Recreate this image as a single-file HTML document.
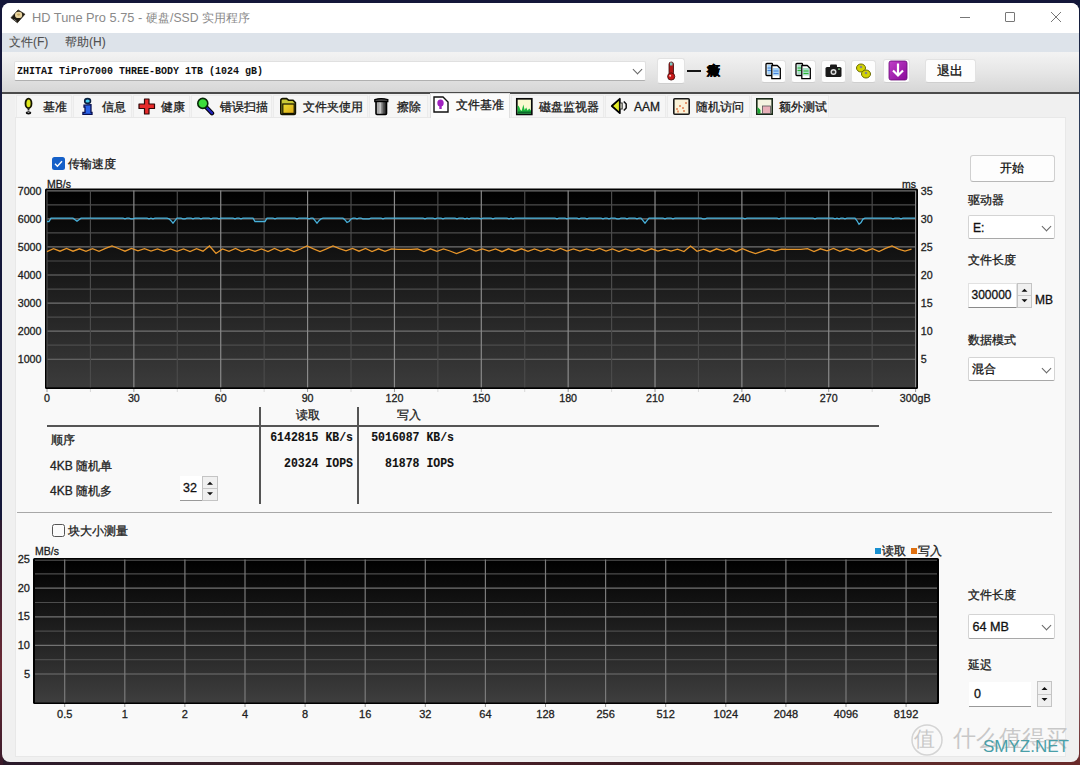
<!DOCTYPE html><html><head><meta charset="utf-8"><title>HD Tune Pro</title><style>
html,body{margin:0;padding:0}body{width:1080px;height:765px;position:relative;overflow:hidden;background:#14173a;font-family:"Liberation Sans",sans-serif}
.a{position:absolute}div{-webkit-text-stroke:0.3px currentColor}
.btn{position:absolute;background:#fdfdfd;border:1px solid #e2e2e2;border-bottom-color:#cfcfcf;border-radius:3px;box-sizing:border-box}
.combo{position:absolute;background:#fff;border:1px solid #d4d4d4;border-bottom-color:#a8a8a8;box-sizing:border-box;border-radius:2px}
.chev{position:absolute;width:6px;height:6px;border-right:1.1px solid #666;border-bottom:1.1px solid #666;transform:rotate(45deg)}
</style></head><body>
<div class="a" style="left:0;top:755px;width:1080px;height:10px;background:linear-gradient(90deg,#2a1a2a,#3a2028 25%,#4a2028 45%,#3a1a22 60%,#5a2a2a 80%,#6a2a2a)"></div>
<div class="a" style="left:0;top:520px;width:3px;height:245px;background:linear-gradient(#2a1a30,#6a2a35 60%,#3a1a2a)"></div>
<div class="a" style="left:1078px;top:0;width:2px;height:765px;background:linear-gradient(#101838,#2a3a58 15%,#4a5866 40%,#6a6070 65%,#8a5a62 90%,#6a2a2a)"></div>
<div class="a" style="left:2px;top:3px;width:1077px;height:759px;border-radius:8px;background:#f0f0f0;overflow:hidden">
<div class="a" style="left:0;top:0;width:1077px;height:30px;background:#fff"></div>
<div class="a" style="left:0;top:30px;width:1077px;height:19px;background:#dde3ea"></div>
<div class="a" style="left:0;top:49px;width:1077px;height:40px;background:linear-gradient(#f3f3f3,#e6e6e6 50%,#d6d6d6)"></div>
<div class="a" style="left:0;top:89px;width:1077px;height:2px;background:#4b4b4b"></div>
<div class="a" style="left:13px;top:114px;width:1051px;height:640px;background:#f9f9f9;border:1px solid #e8e8e8;box-sizing:border-box"></div>
</div>
<svg class="a" style="left:0px;top:0px" width="30" height="30" viewBox="0 0 30 30"><path d="M11 17.7L18.1 9.9L24.9 14.2L17.4 22.8z" fill="#1e1a12" stroke="#2a2418" stroke-width="0.8" stroke-linejoin="round"/><ellipse cx="18.6" cy="14.9" rx="3.6" ry="3.2" fill="#e8d4a0"/><ellipse cx="18.6" cy="14.6" rx="1.6" ry="1.1" fill="#c8a860"/><path d="M14 19.5l2.5 1.5" stroke="#777" stroke-width="1"/></svg>
<div style="position:absolute;left:32px;top:11.7px;font:normal 12.8px 'Liberation Sans', sans-serif;color:#8a8a8a;white-space:nowrap;line-height:1;-webkit-text-stroke:0">HD Tune Pro 5.75 -</div>
<div style="position:absolute;left:146px;top:12px;font:normal 12.2px 'Liberation Sans', sans-serif;color:#8a8a8a;white-space:nowrap;line-height:1;-webkit-text-stroke:0">硬盘/SSD 实用程序</div>
<div class="a" style="left:960px;top:17px;width:10px;height:1px;background:#777"></div>
<div class="a" style="left:1005px;top:12px;width:10px;height:10px;border:1px solid #777;border-radius:1px;box-sizing:border-box"></div>
<svg class="a" style="left:1050px;top:11px" width="12" height="12"><path d="M1 1L11 11M11 1L1 11" stroke="#777" stroke-width="1"/></svg>
<div style="position:absolute;left:9px;top:36px;font:normal 12px 'Liberation Sans', sans-serif;color:#505050;white-space:nowrap;line-height:1;-webkit-text-stroke:0.1px #505050">文件(F)</div>
<div style="position:absolute;left:65px;top:36px;font:normal 12px 'Liberation Sans', sans-serif;color:#505050;white-space:nowrap;line-height:1;-webkit-text-stroke:0.1px #505050">帮助(H)</div>
<div class="combo" style="left:14px;top:61px;width:632px;height:20px;border-color:#e0e0e0;border-bottom-color:#b0b0b0"></div>
<div style="position:absolute;left:17px;top:66px;font:bold 10px 'Liberation Mono', monospace;color:#111;white-space:nowrap;line-height:1;transform:scaleY(1.15);transform-origin:0 0;-webkit-text-stroke:0">ZHITAI TiPro7000 THREE-BODY 1TB (1024 gB)</div>
<div class="chev" style="left:634px;top:66px;"></div>
<div class="btn" style="left:657px;top:58px;width:28px;height:26px"></div>
<svg class="a" style="left:664px;top:61px" width="14" height="20" viewBox="0 0 14 20"><rect x="5" y="1" width="4.5" height="13" rx="2.2" fill="#b01818" stroke="#3a0a0a" stroke-width="0.8"/><rect x="6" y="1.5" width="2.5" height="3" fill="#7ac8c0"/><circle cx="7.2" cy="15.5" r="3.6" fill="#c81818" stroke="#3a0a0a" stroke-width="0.8"/><circle cx="6.2" cy="14.8" r="1" fill="#f8d0d0"/></svg>
<div class="a" style="left:687px;top:69.5px;width:14px;height:2px;background:#151515"></div>
<div style="position:absolute;left:707px;top:64px;font:bold 13px 'Liberation Sans', sans-serif;color:#000;white-space:nowrap;line-height:1;-webkit-text-stroke:0.5px #000">癥</div>
<div class="btn" style="left:761px;top:60px;width:25px;height:23px"></div>
<div class="btn" style="left:791px;top:60px;width:25px;height:23px"></div>
<div class="btn" style="left:821px;top:60px;width:25px;height:23px"></div>
<div class="btn" style="left:851px;top:60px;width:25px;height:23px"></div>
<div class="btn" style="left:883px;top:59px;width:27px;height:24px"></div>
<div class="btn" style="left:925px;top:59px;width:51px;height:24px"></div>
<svg class="a" style="left:765px;top:62px" width="17" height="18" viewBox="0 0 17 18"><rect x="1" y="1.5" width="6.5" height="12" rx="0.8" fill="#fff" stroke="#000" stroke-width="1.3"/><rect x="2.3" y="3" width="4" height="9" fill="#a8d4f8"/><path d="M2.5 6h3.5M2.5 8.5h3.5" stroke="#3a7ad8" stroke-width="0.9"/><path d="M6.8 3.5h5.5l3 3v10.2H6.8z" fill="#fff" stroke="#000" stroke-width="1.3" stroke-linejoin="round"/><rect x="8" y="6" width="6" height="7.5" fill="#a8d4f8"/><path d="M8.5 9h5M8.5 11.5h5" stroke="#3a7ad8" stroke-width="0.9"/></svg>
<svg class="a" style="left:795px;top:62px" width="17" height="18" viewBox="0 0 17 18"><rect x="1" y="1.5" width="6.5" height="12" rx="0.8" fill="#fff" stroke="#000" stroke-width="1.3"/><rect x="2.3" y="3" width="4" height="9" fill="#a8e0c8"/><path d="M2.5 6h3.5M2.5 8.5h3.5" stroke="#20b020" stroke-width="0.9"/><path d="M6.8 3.5h5.5l3 3v10.2H6.8z" fill="#fff" stroke="#000" stroke-width="1.3" stroke-linejoin="round"/><rect x="8" y="6" width="6" height="7.5" fill="#a8e0c8"/><path d="M8.5 9h5M8.5 11.5h5" stroke="#20b020" stroke-width="0.9"/></svg>
<svg class="a" style="left:825px;top:64px" width="17" height="14" viewBox="0 0 17 14"><rect x="0.5" y="3" width="16" height="10" rx="1.5" fill="#1a1a1a"/><rect x="5" y="0.5" width="7" height="3.5" rx="1" fill="#1a1a1a"/><circle cx="8.5" cy="8" r="3" fill="#ddd"/><circle cx="8.5" cy="8" r="1.6" fill="#333"/><rect x="13" y="4.5" width="2" height="1.2" fill="#8c8"/></svg>
<svg class="a" style="left:855px;top:62px" width="17" height="18" viewBox="0 0 17 18"><g stroke="#6a6a00" stroke-width="1"><ellipse cx="6" cy="6" rx="4.5" ry="4" fill="#d4d400"/><ellipse cx="11" cy="12" rx="4.5" ry="4" fill="#d4d400"/></g><circle cx="6" cy="5" r="1.3" fill="#888"/><circle cx="11" cy="11" r="1.3" fill="#888"/></svg>
<svg class="a" style="left:888px;top:60px" width="20" height="21" viewBox="0 0 20 21"><defs><linearGradient id="pg" x1="0" y1="0" x2="1" y2="1"><stop offset="0" stop-color="#c040c8"/><stop offset="1" stop-color="#8a0a9a"/></linearGradient></defs><rect x="1" y="1" width="18" height="19" rx="2" fill="url(#pg)" stroke="#6a0a78" stroke-width="0.8"/><path d="M10 3.5v12M5 10.5l5 5 5-5" stroke="#fff" stroke-width="2.2" fill="none"/></svg>
<div style="position:absolute;left:937px;top:64px;font:500 13px 'Liberation Sans', sans-serif;color:#111;white-space:nowrap;line-height:1;">退出</div>
<div class="a" style="left:15px;top:95px;width:815px;height:22px;background:#f3f3f3"></div>
<div class="a" style="left:16px;top:95px;width:56px;height:22px;background:#f6f6f6;border:1px solid #ebebeb;border-bottom:none;box-sizing:border-box"></div>
<div class="a" style="left:73px;top:95px;width:59px;height:22px;background:#f6f6f6;border:1px solid #ebebeb;border-bottom:none;box-sizing:border-box"></div>
<div class="a" style="left:133px;top:95px;width:57px;height:22px;background:#f6f6f6;border:1px solid #ebebeb;border-bottom:none;box-sizing:border-box"></div>
<div class="a" style="left:191px;top:95px;width:81px;height:22px;background:#f6f6f6;border:1px solid #ebebeb;border-bottom:none;box-sizing:border-box"></div>
<div class="a" style="left:273px;top:95px;width:95px;height:22px;background:#f6f6f6;border:1px solid #ebebeb;border-bottom:none;box-sizing:border-box"></div>
<div class="a" style="left:369px;top:95px;width:59px;height:22px;background:#f6f6f6;border:1px solid #ebebeb;border-bottom:none;box-sizing:border-box"></div>
<div class="a" style="left:511px;top:95px;width:93px;height:22px;background:#f6f6f6;border:1px solid #ebebeb;border-bottom:none;box-sizing:border-box"></div>
<div class="a" style="left:605px;top:95px;width:61px;height:22px;background:#f6f6f6;border:1px solid #ebebeb;border-bottom:none;box-sizing:border-box"></div>
<div class="a" style="left:667px;top:95px;width:83px;height:22px;background:#f6f6f6;border:1px solid #ebebeb;border-bottom:none;box-sizing:border-box"></div>
<div class="a" style="left:751px;top:95px;width:78px;height:22px;background:#f6f6f6;border:1px solid #ebebeb;border-bottom:none;box-sizing:border-box"></div>
<div class="a" style="left:430px;top:93px;width:80px;height:25px;background:#fbfbfb;border:1px solid #e0e0e0;border-bottom:none;box-sizing:border-box"></div>
<div style="position:absolute;left:43px;top:101px;font:500 12px 'Liberation Sans', sans-serif;color:#1a1a1a;white-space:nowrap;line-height:1;">基准</div>
<div style="position:absolute;left:102px;top:101px;font:500 12px 'Liberation Sans', sans-serif;color:#1a1a1a;white-space:nowrap;line-height:1;">信息</div>
<div style="position:absolute;left:161px;top:101px;font:500 12px 'Liberation Sans', sans-serif;color:#1a1a1a;white-space:nowrap;line-height:1;">健康</div>
<div style="position:absolute;left:220px;top:101px;font:500 12px 'Liberation Sans', sans-serif;color:#1a1a1a;white-space:nowrap;line-height:1;">错误扫描</div>
<div style="position:absolute;left:303px;top:101px;font:500 12px 'Liberation Sans', sans-serif;color:#1a1a1a;white-space:nowrap;line-height:1;">文件夹使用</div>
<div style="position:absolute;left:397px;top:101px;font:500 12px 'Liberation Sans', sans-serif;color:#1a1a1a;white-space:nowrap;line-height:1;">擦除</div>
<div style="position:absolute;left:456px;top:99px;font:500 12px 'Liberation Sans', sans-serif;color:#1a1a1a;white-space:nowrap;line-height:1;">文件基准</div>
<div style="position:absolute;left:539px;top:101px;font:500 12px 'Liberation Sans', sans-serif;color:#1a1a1a;white-space:nowrap;line-height:1;">磁盘监视器</div>
<div style="position:absolute;left:634px;top:101px;font:500 12px 'Liberation Sans', sans-serif;color:#1a1a1a;white-space:nowrap;line-height:1;">AAM</div>
<div style="position:absolute;left:696px;top:101px;font:500 12px 'Liberation Sans', sans-serif;color:#1a1a1a;white-space:nowrap;line-height:1;">随机访问</div>
<div style="position:absolute;left:779px;top:101px;font:500 12px 'Liberation Sans', sans-serif;color:#1a1a1a;white-space:nowrap;line-height:1;">额外测试</div>
<svg class="a" style="left:24px;top:97px" width="10" height="19" viewBox="0 0 10 19"><ellipse cx="4.5" cy="6.4" rx="3" ry="4.7" fill="#dfe81c" stroke="#141400" stroke-width="1.8"/><rect x="3.6" y="11" width="1.8" height="2.5" fill="#222"/><ellipse cx="4.5" cy="15.8" rx="2.8" ry="1.6" fill="#0a0a0a"/><ellipse cx="4.5" cy="15.4" rx="1.2" ry="0.45" fill="#ddd"/></svg>
<svg class="a" style="left:82px;top:97px" width="11" height="19" viewBox="0 0 11 19"><ellipse cx="5.6" cy="4" rx="2.9" ry="2.4" fill="#48d0f0" stroke="#0a2040" stroke-width="1.6"/><path d="M2 8.2L9 7.6V15.4H10V17.4H0.9V15.4H3V10.2H2z" fill="#2a62e8" stroke="#0a1050" stroke-width="1.3"/></svg>
<svg class="a" style="left:138px;top:98px" width="18" height="17" viewBox="0 0 18 17"><path d="M6.5 1h4.5v5h5.5v4.5h-5.5v5.5H6.5v-5.5H1V6h5.5z" fill="#e82a2a" stroke="#300808" stroke-width="1.2" stroke-linejoin="round"/></svg>
<svg class="a" style="left:195px;top:96px" width="20" height="20" viewBox="0 0 20 20"><path d="M11 11L17 17.2" stroke="#000" stroke-width="4.4" stroke-linecap="round"/><path d="M11 11L17 17.2" stroke="#2222b8" stroke-width="2.4" stroke-linecap="round"/><circle cx="7.8" cy="7.4" r="5" fill="#3cdc3c" stroke="#082808" stroke-width="1.6"/></svg>
<svg class="a" style="left:279px;top:97px" width="18" height="19" viewBox="0 0 18 19"><defs><linearGradient id="fg" x1="0" y1="0" x2="1" y2="1"><stop offset="0" stop-color="#e8e030"/><stop offset="1" stop-color="#e0a818"/></linearGradient></defs><path d="M1.8 3.5Q1.8 1.6 3.8 1.6H7.6L9.6 3.2H14L16.4 5.6V16.2Q16.4 17.4 15.2 17.4H3Q1.8 17.4 1.8 16.2z" fill="#c8c838" stroke="#141400" stroke-width="1.6"/><rect x="3.8" y="7" width="11.4" height="9.4" fill="url(#fg)" stroke="#141400" stroke-width="1.2"/></svg>
<svg class="a" style="left:373px;top:97px" width="17" height="19" viewBox="0 0 17 19"><defs><linearGradient id="tg" x1="0" y1="0" x2="1" y2="0"><stop offset="0" stop-color="#888"/><stop offset="0.35" stop-color="#e0e0e0"/><stop offset="0.7" stop-color="#555"/><stop offset="1" stop-color="#222"/></linearGradient></defs><rect x="3" y="4" width="10.5" height="13.5" rx="1" fill="url(#tg)" stroke="#000" stroke-width="1.6"/><path d="M1.8 2.6Q8 0.6 14.8 2.6V4.6H1.8z" fill="#444" stroke="#000" stroke-width="1.3"/><path d="M6 5.5v11M9 5.5v11" stroke="#777" stroke-width="0.7"/></svg>
<svg class="a" style="left:433px;top:96px" width="16" height="17" viewBox="0 0 16 17"><path d="M1 1h9l5 5v10H1z" fill="#fff" stroke="#111" stroke-width="1.4"/><ellipse cx="7.5" cy="7" rx="3.2" ry="3.6" fill="#a020c0"/><rect x="6.3" y="10" width="2.4" height="3" fill="#a020c0"/></svg>
<svg class="a" style="left:515px;top:97px" width="19" height="19" viewBox="0 0 19 19"><rect x="1.8" y="1.8" width="15" height="15.6" fill="#fafad0" stroke="#0a0a0a" stroke-width="1.7"/><path d="M2.6 16.6V8.5Q4 8.5 5.2 12.5L6.6 14L8.4 7.5L9.6 13L11.2 10.5L12.6 13.5L14.2 11.5L16 13.5V16.6z" fill="#1cb83c"/><path d="M2.6 16.6V14.5H16V16.6z" fill="#0a6a2a"/></svg>
<svg class="a" style="left:610px;top:97px" width="19" height="18" viewBox="0 0 19 18"><path d="M1.8 9L9.8 1.8V16.2z" fill="#e4ec28" stroke="#000" stroke-width="1.8" stroke-linejoin="round"/><rect x="10" y="6" width="2.2" height="6" fill="#d8d8c8" stroke="#222" stroke-width="0.9"/><path d="M13.8 4.5L16.2 7V11L13.8 13.5" stroke="#111" stroke-width="1.5" fill="none"/></svg>
<svg class="a" style="left:673px;top:98px" width="17" height="17" viewBox="0 0 17 17"><rect x="0.8" y="0.8" width="15.4" height="15.4" rx="1" fill="#fbf3d8" stroke="#1a1a1a" stroke-width="1.6"/><g fill="#e89a70"><rect x="3" y="10" width="2" height="2"/><rect x="6" y="7" width="2" height="2"/><rect x="9" y="9" width="2" height="2"/><rect x="12" y="4" width="2" height="2"/><rect x="4" y="12.5" width="2" height="2"/><rect x="10" y="12" width="2" height="2"/></g></svg>
<svg class="a" style="left:756px;top:98px" width="17" height="17" viewBox="0 0 17 17"><rect x="0.8" y="0.8" width="15.4" height="15.4" fill="#f4f4e0" stroke="#1a2a1a" stroke-width="1.6"/><path d="M1.5 9l3 3v3.5h-3z" fill="#1aa830"/><rect x="6.5" y="8" width="8" height="7.5" fill="#e8b0b8" stroke="#555" stroke-width="0.8"/></svg>
<div class="a" style="left:52px;top:157px;width:13px;height:13px;background:#1560c8;border-radius:2.5px"></div>
<svg class="a" style="left:52px;top:157px" width="13" height="13"><path d="M3 6.8l2.4 2.4L10 4.3" stroke="#fff" stroke-width="1.4" fill="none"/></svg>
<div style="position:absolute;left:68px;top:158px;font:500 12px 'Liberation Sans', sans-serif;color:#1a1a1a;white-space:nowrap;line-height:1;">传输速度</div>
<svg width="1080" height="765" style="position:absolute;left:0;top:0">
<defs><linearGradient id="g1" x1="0" y1="0" x2="0" y2="1"><stop offset="0" stop-color="#000"/><stop offset="1" stop-color="#3b3b3b"/></linearGradient>
<linearGradient id="g2" x1="0" y1="0" x2="0" y2="1"><stop offset="0" stop-color="#000"/><stop offset="1" stop-color="#3e3e3e"/></linearGradient></defs>
<rect x="45" y="188.5" width="873" height="200.5" rx="1.5" fill="#000"/>
<rect x="47" y="190.5" width="868.6" height="196.8" fill="url(#g1)"/>
<line x1="47" x2="915.6" y1="359.23" y2="359.23" stroke="#727272" stroke-width="1.2"/>
<line x1="47" x2="915.6" y1="345.19" y2="345.19" stroke="#4c4c4c" stroke-width="1.2"/>
<line x1="47" x2="915.6" y1="331.16" y2="331.16" stroke="#727272" stroke-width="1.2"/>
<line x1="47" x2="915.6" y1="317.12" y2="317.12" stroke="#4c4c4c" stroke-width="1.2"/>
<line x1="47" x2="915.6" y1="303.09" y2="303.09" stroke="#727272" stroke-width="1.2"/>
<line x1="47" x2="915.6" y1="289.05" y2="289.05" stroke="#4c4c4c" stroke-width="1.2"/>
<line x1="47" x2="915.6" y1="275.01" y2="275.01" stroke="#727272" stroke-width="1.2"/>
<line x1="47" x2="915.6" y1="260.98" y2="260.98" stroke="#4c4c4c" stroke-width="1.2"/>
<line x1="47" x2="915.6" y1="246.94" y2="246.94" stroke="#727272" stroke-width="1.2"/>
<line x1="47" x2="915.6" y1="232.91" y2="232.91" stroke="#4c4c4c" stroke-width="1.2"/>
<line x1="47" x2="915.6" y1="218.87" y2="218.87" stroke="#727272" stroke-width="1.2"/>
<line x1="47" x2="915.6" y1="204.84" y2="204.84" stroke="#4c4c4c" stroke-width="1.2"/>
<line x1="47" x2="915.6" y1="190.80" y2="190.80" stroke="#727272" stroke-width="1.2"/>
<line x1="47.00" x2="47.00" y1="190.5" y2="387.3" stroke="#4a4a4a" stroke-width="1.2"/>
<line x1="90.43" x2="90.43" y1="190.5" y2="387.3" stroke="#4a4a4a" stroke-width="1.2"/>
<line x1="133.86" x2="133.86" y1="190.5" y2="387.3" stroke="#8a8a8a" stroke-width="1.2"/>
<line x1="177.29" x2="177.29" y1="190.5" y2="387.3" stroke="#4a4a4a" stroke-width="1.2"/>
<line x1="220.72" x2="220.72" y1="190.5" y2="387.3" stroke="#8a8a8a" stroke-width="1.2"/>
<line x1="264.15" x2="264.15" y1="190.5" y2="387.3" stroke="#4a4a4a" stroke-width="1.2"/>
<line x1="307.58" x2="307.58" y1="190.5" y2="387.3" stroke="#8a8a8a" stroke-width="1.2"/>
<line x1="351.01" x2="351.01" y1="190.5" y2="387.3" stroke="#4a4a4a" stroke-width="1.2"/>
<line x1="394.44" x2="394.44" y1="190.5" y2="387.3" stroke="#8a8a8a" stroke-width="1.2"/>
<line x1="437.87" x2="437.87" y1="190.5" y2="387.3" stroke="#4a4a4a" stroke-width="1.2"/>
<line x1="481.30" x2="481.30" y1="190.5" y2="387.3" stroke="#8a8a8a" stroke-width="1.2"/>
<line x1="524.73" x2="524.73" y1="190.5" y2="387.3" stroke="#4a4a4a" stroke-width="1.2"/>
<line x1="568.16" x2="568.16" y1="190.5" y2="387.3" stroke="#8a8a8a" stroke-width="1.2"/>
<line x1="611.59" x2="611.59" y1="190.5" y2="387.3" stroke="#4a4a4a" stroke-width="1.2"/>
<line x1="655.02" x2="655.02" y1="190.5" y2="387.3" stroke="#8a8a8a" stroke-width="1.2"/>
<line x1="698.45" x2="698.45" y1="190.5" y2="387.3" stroke="#4a4a4a" stroke-width="1.2"/>
<line x1="741.88" x2="741.88" y1="190.5" y2="387.3" stroke="#8a8a8a" stroke-width="1.2"/>
<line x1="785.31" x2="785.31" y1="190.5" y2="387.3" stroke="#4a4a4a" stroke-width="1.2"/>
<line x1="828.74" x2="828.74" y1="190.5" y2="387.3" stroke="#8a8a8a" stroke-width="1.2"/>
<line x1="872.17" x2="872.17" y1="190.5" y2="387.3" stroke="#4a4a4a" stroke-width="1.2"/>
<line x1="915.60" x2="915.60" y1="190.5" y2="387.3" stroke="#8a8a8a" stroke-width="1.2"/>
<line x1="47.00" x2="47.00" y1="389" y2="392" stroke="#999" stroke-width="1"/>
<line x1="90.43" x2="90.43" y1="389" y2="392" stroke="#d8d8d8" stroke-width="1"/>
<line x1="133.86" x2="133.86" y1="389" y2="392" stroke="#999" stroke-width="1"/>
<line x1="177.29" x2="177.29" y1="389" y2="392" stroke="#d8d8d8" stroke-width="1"/>
<line x1="220.72" x2="220.72" y1="389" y2="392" stroke="#999" stroke-width="1"/>
<line x1="264.15" x2="264.15" y1="389" y2="392" stroke="#d8d8d8" stroke-width="1"/>
<line x1="307.58" x2="307.58" y1="389" y2="392" stroke="#999" stroke-width="1"/>
<line x1="351.01" x2="351.01" y1="389" y2="392" stroke="#d8d8d8" stroke-width="1"/>
<line x1="394.44" x2="394.44" y1="389" y2="392" stroke="#999" stroke-width="1"/>
<line x1="437.87" x2="437.87" y1="389" y2="392" stroke="#d8d8d8" stroke-width="1"/>
<line x1="481.30" x2="481.30" y1="389" y2="392" stroke="#999" stroke-width="1"/>
<line x1="524.73" x2="524.73" y1="389" y2="392" stroke="#d8d8d8" stroke-width="1"/>
<line x1="568.16" x2="568.16" y1="389" y2="392" stroke="#999" stroke-width="1"/>
<line x1="611.59" x2="611.59" y1="389" y2="392" stroke="#d8d8d8" stroke-width="1"/>
<line x1="655.02" x2="655.02" y1="389" y2="392" stroke="#999" stroke-width="1"/>
<line x1="698.45" x2="698.45" y1="389" y2="392" stroke="#d8d8d8" stroke-width="1"/>
<line x1="741.88" x2="741.88" y1="389" y2="392" stroke="#999" stroke-width="1"/>
<line x1="785.31" x2="785.31" y1="389" y2="392" stroke="#d8d8d8" stroke-width="1"/>
<line x1="828.74" x2="828.74" y1="389" y2="392" stroke="#999" stroke-width="1"/>
<line x1="872.17" x2="872.17" y1="389" y2="392" stroke="#d8d8d8" stroke-width="1"/>
<line x1="915.60" x2="915.60" y1="389" y2="392" stroke="#999" stroke-width="1"/>
<polyline fill="none" stroke="#48b2dc" stroke-width="1.3" points="47.0,221.5 49.0,221.5 51.0,218.2 53.0,218.2 55.0,218.2 57.0,218.2 59.0,218.2 61.0,218.2 63.0,218.2 65.0,218.2 67.0,218.2 69.0,218.2 71.0,218.2 73.0,218.2 75.0,219.7 77.0,221.2 79.0,219.7 81.0,218.2 83.0,218.2 85.0,218.2 87.0,218.2 89.0,218.2 91.0,218.2 93.0,218.2 95.0,218.2 97.0,218.2 99.0,218.2 101.0,218.2 103.0,218.2 105.0,218.2 107.0,218.2 109.0,218.2 111.0,218.2 113.0,218.2 115.0,218.2 117.0,218.2 119.0,218.2 121.0,218.2 123.0,218.2 125.0,218.8 127.0,218.2 129.0,218.2 131.0,218.8 133.0,218.8 135.0,218.2 137.0,218.2 139.0,218.2 141.0,218.2 143.0,218.2 145.0,218.2 147.0,218.2 149.0,218.8 151.0,218.2 153.0,218.8 155.0,218.2 157.0,218.2 159.0,218.2 161.0,218.2 163.0,218.2 165.0,218.2 167.0,218.2 169.0,218.8 171.0,220.7 173.0,223.2 175.0,220.7 177.0,218.2 179.0,218.2 181.0,218.2 183.0,218.8 185.0,218.8 187.0,218.2 189.0,218.2 191.0,218.2 193.0,218.8 195.0,218.2 197.0,218.2 199.0,218.2 201.0,218.8 203.0,218.2 205.0,218.2 207.0,218.2 209.0,218.2 211.0,218.8 213.0,218.2 215.0,218.2 217.0,218.2 219.0,218.8 221.0,218.2 223.0,218.2 225.0,218.2 227.0,218.2 229.0,218.2 231.0,218.2 233.0,218.2 235.0,218.8 237.0,218.2 239.0,218.2 241.0,218.8 243.0,218.2 245.0,218.2 247.0,218.2 249.0,218.2 251.0,218.2 253.0,218.2 255.0,221.5 257.0,221.5 259.0,221.5 261.0,221.5 263.0,221.5 265.0,221.5 267.0,218.2 269.0,218.2 271.0,218.2 273.0,218.2 275.0,218.8 277.0,218.2 279.0,218.2 281.0,218.2 283.0,218.2 285.0,218.2 287.0,218.2 289.0,218.2 291.0,218.2 293.0,218.2 295.0,218.2 297.0,218.8 299.0,218.2 301.0,218.2 303.0,218.2 305.0,218.2 307.0,218.2 309.0,218.8 311.0,218.2 313.0,218.2 315.0,220.7 317.0,223.2 319.0,220.7 321.0,218.8 323.0,218.2 325.0,218.2 327.0,218.2 329.0,218.2 331.0,218.2 333.0,218.2 335.0,218.2 337.0,218.2 339.0,218.2 341.0,218.2 343.0,218.2 345.0,219.9 347.0,222.4 349.0,221.5 351.0,219.0 353.0,218.2 355.0,218.2 357.0,218.8 359.0,218.2 361.0,218.2 363.0,218.8 365.0,218.8 367.0,218.8 369.0,218.8 371.0,218.2 373.0,218.2 375.0,218.2 377.0,218.2 379.0,218.2 381.0,218.2 383.0,218.8 385.0,218.2 387.0,218.2 389.0,218.2 391.0,218.2 393.0,218.2 395.0,218.2 397.0,218.2 399.0,218.2 401.0,218.2 403.0,218.2 405.0,218.2 407.0,218.2 409.0,218.2 411.0,218.2 413.0,218.2 415.0,218.2 417.0,218.2 419.0,218.2 421.0,218.2 423.0,218.2 425.0,218.8 427.0,218.2 429.0,218.2 431.0,218.2 433.0,218.2 435.0,218.8 437.0,218.2 439.0,218.2 441.0,218.2 443.0,218.8 445.0,218.2 447.0,218.2 449.0,218.2 451.0,218.2 453.0,218.2 455.0,218.2 457.0,218.8 459.0,218.2 461.0,218.2 463.0,218.2 465.0,218.8 467.0,218.2 469.0,218.8 471.0,218.2 473.0,218.2 475.0,218.2 477.0,218.2 479.0,218.2 481.0,218.8 483.0,218.2 485.0,218.2 487.0,218.2 489.0,218.2 491.0,218.2 493.0,218.8 495.0,218.2 497.0,218.2 499.0,218.2 501.0,218.2 503.0,218.2 505.0,218.2 507.0,218.2 509.0,218.8 511.0,218.2 513.0,218.8 515.0,218.2 517.0,218.2 519.0,218.2 521.0,218.2 523.0,218.2 525.0,218.2 527.0,218.2 529.0,218.2 531.0,218.2 533.0,218.2 535.0,218.2 537.0,218.2 539.0,218.2 541.0,218.2 543.0,218.2 545.0,218.2 547.0,218.2 549.0,218.2 551.0,218.2 553.0,218.2 555.0,218.2 557.0,218.8 559.0,218.2 561.0,218.2 563.0,218.2 565.0,218.2 567.0,218.8 569.0,218.2 571.0,218.2 573.0,218.2 575.0,218.2 577.0,218.2 579.0,218.8 581.0,218.2 583.0,218.2 585.0,218.2 587.0,218.8 589.0,218.2 591.0,218.2 593.0,218.2 595.0,218.2 597.0,218.2 599.0,218.2 601.0,218.2 603.0,218.8 605.0,218.2 607.0,218.2 609.0,218.8 611.0,218.2 613.0,218.2 615.0,218.2 617.0,218.8 619.0,218.8 621.0,218.2 623.0,218.2 625.0,218.2 627.0,218.8 629.0,218.2 631.0,218.2 633.0,218.2 635.0,218.2 637.0,218.8 639.0,218.2 641.0,218.2 643.0,220.7 645.0,223.2 647.0,220.7 649.0,218.2 651.0,218.2 653.0,218.2 655.0,218.2 657.0,218.2 659.0,218.2 661.0,218.2 663.0,218.2 665.0,218.8 667.0,218.2 669.0,218.2 671.0,218.2 673.0,218.8 675.0,218.2 677.0,218.2 679.0,218.2 681.0,218.2 683.0,218.2 685.0,218.2 687.0,218.2 689.0,218.2 691.0,218.2 693.0,218.2 695.0,218.2 697.0,218.2 699.0,218.2 701.0,218.2 703.0,218.8 705.0,218.8 707.0,218.2 709.0,218.2 711.0,218.2 713.0,218.2 715.0,218.2 717.0,218.2 719.0,218.2 721.0,218.2 723.0,218.2 725.0,218.2 727.0,218.2 729.0,218.2 731.0,218.2 733.0,218.2 735.0,218.2 737.0,218.2 739.0,218.2 741.0,218.2 743.0,218.2 745.0,218.8 747.0,218.2 749.0,218.2 751.0,218.2 753.0,218.2 755.0,218.2 757.0,218.2 759.0,218.2 761.0,218.2 763.0,218.2 765.0,218.2 767.0,218.2 769.0,218.2 771.0,218.2 773.0,218.2 775.0,218.2 777.0,218.2 779.0,218.8 781.0,218.2 783.0,218.2 785.0,218.2 787.0,218.2 789.0,218.2 791.0,218.2 793.0,218.2 795.0,218.2 797.0,218.2 799.0,218.2 801.0,218.2 803.0,218.2 805.0,218.2 807.0,218.2 809.0,218.2 811.0,218.2 813.0,218.2 815.0,218.8 817.0,218.2 819.0,218.2 821.0,218.2 823.0,218.2 825.0,218.2 827.0,218.2 829.0,218.2 831.0,218.2 833.0,218.2 835.0,218.8 837.0,218.2 839.0,218.8 841.0,218.2 843.0,218.2 845.0,218.8 847.0,218.2 849.0,218.2 851.0,218.2 853.0,218.2 855.0,218.2 857.0,220.8 859.0,224.3 861.0,222.6 863.0,219.1 865.0,218.2 867.0,218.2 869.0,218.2 871.0,218.2 873.0,218.2 875.0,218.2 877.0,218.2 879.0,218.2 881.0,218.2 883.0,218.2 885.0,218.2 887.0,218.2 889.0,218.2 891.0,218.2 893.0,218.8 895.0,218.2 897.0,218.2 899.0,218.2 901.0,218.8 903.0,218.2 905.0,218.2 907.0,218.2 909.0,218.2 911.0,218.2 913.0,218.2 915.0,218.2"/>
<polyline fill="none" stroke="#e8962a" stroke-width="1.3" points="47.0,251.7 53.5,248.6 60.0,251.2 66.5,248.4 73.0,251.2 79.5,248.8 86.0,251.3 92.5,248.6 99.0,251.3 105.5,248.4 112.0,246.0 118.5,248.5 125.0,251.2 131.5,248.4 138.0,250.9 144.5,248.6 151.0,251.1 157.5,248.9 164.0,251.3 170.5,249.0 177.0,251.4 183.5,249.0 190.0,251.6 196.5,248.7 203.0,251.2 209.5,246.0 216.0,253.5 222.5,249.0 229.0,251.4 235.5,248.4 242.0,251.6 248.5,249.1 255.0,251.4 261.5,249.0 268.0,251.5 274.5,248.5 281.0,251.3 287.5,248.8 294.0,251.6 300.5,249.0 307.0,246.0 313.5,248.9 320.0,251.6 326.5,248.9 333.0,246.0 339.5,248.6 346.0,250.9 352.5,248.5 359.0,251.2 365.5,248.5 372.0,251.6 378.5,248.8 385.0,251.4 391.5,248.9 398.0,249.3 404.5,249.3 411.0,249.3 417.5,249.0 424.0,251.5 430.5,248.8 437.0,251.3 443.5,248.9 450.0,251.0 456.5,253.5 463.0,251.1 469.5,248.5 476.0,251.1 482.5,249.0 489.0,251.1 495.5,249.0 502.0,251.7 508.5,248.8 515.0,251.2 521.5,248.8 528.0,251.4 534.5,249.0 541.0,251.4 547.5,248.9 554.0,251.0 560.5,248.5 567.0,251.1 573.5,249.0 580.0,251.1 586.5,248.9 593.0,250.9 599.5,248.4 606.0,251.1 612.5,248.9 619.0,251.5 625.5,248.9 632.0,251.1 638.5,248.8 645.0,251.3 651.5,248.8 658.0,251.0 664.5,249.1 671.0,251.1 677.5,249.2 684.0,251.6 690.5,246.0 697.0,251.3 703.5,249.1 710.0,251.7 716.5,248.8 723.0,251.1 729.5,248.6 736.0,251.7 742.5,248.6 749.0,251.4 755.5,253.5 762.0,251.3 768.5,249.2 775.0,251.0 781.5,249.1 788.0,249.3 794.5,249.3 801.0,249.3 807.5,248.6 814.0,251.6 820.5,248.8 827.0,250.9 833.5,248.4 840.0,251.3 846.5,248.8 853.0,251.1 859.5,248.5 866.0,251.2 872.5,248.7 879.0,251.6 885.5,248.4 892.0,246.0 898.5,249.1 905.0,251.0 911.5,249.1"/>
<rect x="33" y="558" width="906" height="146" rx="1.5" fill="#000"/>
<rect x="35" y="559.5" width="902" height="143" fill="url(#g2)"/>
<line x1="35" x2="937" y1="674.00" y2="674.00" stroke="#727272" stroke-width="1.2"/>
<line x1="35" x2="937" y1="659.70" y2="659.70" stroke="#4c4c4c" stroke-width="1.2"/>
<line x1="35" x2="937" y1="645.40" y2="645.40" stroke="#727272" stroke-width="1.2"/>
<line x1="35" x2="937" y1="631.10" y2="631.10" stroke="#4c4c4c" stroke-width="1.2"/>
<line x1="35" x2="937" y1="616.80" y2="616.80" stroke="#727272" stroke-width="1.2"/>
<line x1="35" x2="937" y1="602.50" y2="602.50" stroke="#4c4c4c" stroke-width="1.2"/>
<line x1="35" x2="937" y1="588.20" y2="588.20" stroke="#727272" stroke-width="1.2"/>
<line x1="35" x2="937" y1="573.90" y2="573.90" stroke="#4c4c4c" stroke-width="1.2"/>
<line x1="35" x2="937" y1="560.2" y2="560.2" stroke="#5a5a5a" stroke-width="1"/>
<line x1="64.70" x2="64.70" y1="559.5" y2="702.6" stroke="#7a7a7a" stroke-width="1.2"/>
<line x1="64.70" x2="64.70" y1="704" y2="707" stroke="#999" stroke-width="1"/>
<line x1="124.80" x2="124.80" y1="559.5" y2="702.6" stroke="#7a7a7a" stroke-width="1.2"/>
<line x1="124.80" x2="124.80" y1="704" y2="707" stroke="#999" stroke-width="1"/>
<line x1="184.90" x2="184.90" y1="559.5" y2="702.6" stroke="#7a7a7a" stroke-width="1.2"/>
<line x1="184.90" x2="184.90" y1="704" y2="707" stroke="#999" stroke-width="1"/>
<line x1="245.00" x2="245.00" y1="559.5" y2="702.6" stroke="#7a7a7a" stroke-width="1.2"/>
<line x1="245.00" x2="245.00" y1="704" y2="707" stroke="#999" stroke-width="1"/>
<line x1="305.10" x2="305.10" y1="559.5" y2="702.6" stroke="#7a7a7a" stroke-width="1.2"/>
<line x1="305.10" x2="305.10" y1="704" y2="707" stroke="#999" stroke-width="1"/>
<line x1="365.20" x2="365.20" y1="559.5" y2="702.6" stroke="#7a7a7a" stroke-width="1.2"/>
<line x1="365.20" x2="365.20" y1="704" y2="707" stroke="#999" stroke-width="1"/>
<line x1="425.30" x2="425.30" y1="559.5" y2="702.6" stroke="#7a7a7a" stroke-width="1.2"/>
<line x1="425.30" x2="425.30" y1="704" y2="707" stroke="#999" stroke-width="1"/>
<line x1="485.40" x2="485.40" y1="559.5" y2="702.6" stroke="#7a7a7a" stroke-width="1.2"/>
<line x1="485.40" x2="485.40" y1="704" y2="707" stroke="#999" stroke-width="1"/>
<line x1="545.50" x2="545.50" y1="559.5" y2="702.6" stroke="#7a7a7a" stroke-width="1.2"/>
<line x1="545.50" x2="545.50" y1="704" y2="707" stroke="#999" stroke-width="1"/>
<line x1="605.60" x2="605.60" y1="559.5" y2="702.6" stroke="#7a7a7a" stroke-width="1.2"/>
<line x1="605.60" x2="605.60" y1="704" y2="707" stroke="#999" stroke-width="1"/>
<line x1="665.70" x2="665.70" y1="559.5" y2="702.6" stroke="#7a7a7a" stroke-width="1.2"/>
<line x1="665.70" x2="665.70" y1="704" y2="707" stroke="#999" stroke-width="1"/>
<line x1="725.80" x2="725.80" y1="559.5" y2="702.6" stroke="#7a7a7a" stroke-width="1.2"/>
<line x1="725.80" x2="725.80" y1="704" y2="707" stroke="#999" stroke-width="1"/>
<line x1="785.90" x2="785.90" y1="559.5" y2="702.6" stroke="#7a7a7a" stroke-width="1.2"/>
<line x1="785.90" x2="785.90" y1="704" y2="707" stroke="#999" stroke-width="1"/>
<line x1="846.00" x2="846.00" y1="559.5" y2="702.6" stroke="#7a7a7a" stroke-width="1.2"/>
<line x1="846.00" x2="846.00" y1="704" y2="707" stroke="#999" stroke-width="1"/>
<line x1="906.10" x2="906.10" y1="559.5" y2="702.6" stroke="#7a7a7a" stroke-width="1.2"/>
<line x1="906.10" x2="906.10" y1="704" y2="707" stroke="#999" stroke-width="1"/>
</svg>
<div style="position:absolute;right:1038.5px;top:353.92857142857144px;font:500 10.7px 'Liberation Sans', sans-serif;color:#1e1e1e;white-space:nowrap;line-height:1;text-align:right;">1000</div>
<div style="position:absolute;right:1038.5px;top:325.85714285714283px;font:500 10.7px 'Liberation Sans', sans-serif;color:#1e1e1e;white-space:nowrap;line-height:1;text-align:right;">2000</div>
<div style="position:absolute;right:1038.5px;top:297.7857142857143px;font:500 10.7px 'Liberation Sans', sans-serif;color:#1e1e1e;white-space:nowrap;line-height:1;text-align:right;">3000</div>
<div style="position:absolute;right:1038.5px;top:269.7142857142857px;font:500 10.7px 'Liberation Sans', sans-serif;color:#1e1e1e;white-space:nowrap;line-height:1;text-align:right;">4000</div>
<div style="position:absolute;right:1038.5px;top:241.64285714285714px;font:500 10.7px 'Liberation Sans', sans-serif;color:#1e1e1e;white-space:nowrap;line-height:1;text-align:right;">5000</div>
<div style="position:absolute;right:1038.5px;top:213.57142857142858px;font:500 10.7px 'Liberation Sans', sans-serif;color:#1e1e1e;white-space:nowrap;line-height:1;text-align:right;">6000</div>
<div style="position:absolute;right:1038.5px;top:185.5px;font:500 10.7px 'Liberation Sans', sans-serif;color:#1e1e1e;white-space:nowrap;line-height:1;text-align:right;">7000</div>
<div style="position:absolute;left:47px;top:179px;font:500 10.5px 'Liberation Sans', sans-serif;color:#1e1e1e;white-space:nowrap;line-height:1;">MB/s</div>
<div style="position:absolute;left:902px;top:179px;font:500 10.5px 'Liberation Sans', sans-serif;color:#1e1e1e;white-space:nowrap;line-height:1;">ms</div>
<div style="position:absolute;left:920.8px;top:353.92857142857144px;font:500 10.7px 'Liberation Sans', sans-serif;color:#1e1e1e;white-space:nowrap;line-height:1;">5</div>
<div style="position:absolute;left:920.8px;top:325.85714285714283px;font:500 10.7px 'Liberation Sans', sans-serif;color:#1e1e1e;white-space:nowrap;line-height:1;">10</div>
<div style="position:absolute;left:920.8px;top:297.7857142857143px;font:500 10.7px 'Liberation Sans', sans-serif;color:#1e1e1e;white-space:nowrap;line-height:1;">15</div>
<div style="position:absolute;left:920.8px;top:269.7142857142857px;font:500 10.7px 'Liberation Sans', sans-serif;color:#1e1e1e;white-space:nowrap;line-height:1;">20</div>
<div style="position:absolute;left:920.8px;top:241.64285714285714px;font:500 10.7px 'Liberation Sans', sans-serif;color:#1e1e1e;white-space:nowrap;line-height:1;">25</div>
<div style="position:absolute;left:920.8px;top:213.57142857142858px;font:500 10.7px 'Liberation Sans', sans-serif;color:#1e1e1e;white-space:nowrap;line-height:1;">30</div>
<div style="position:absolute;left:920.8px;top:185.5px;font:500 10.7px 'Liberation Sans', sans-serif;color:#1e1e1e;white-space:nowrap;line-height:1;">35</div>
<div style="position:absolute;left:-3.0px;width:100px;top:393.3px;font:500 10.7px 'Liberation Sans', sans-serif;color:#1e1e1e;white-space:nowrap;line-height:1;text-align:center;">0</div>
<div style="position:absolute;left:83.86000000000001px;width:100px;top:393.3px;font:500 10.7px 'Liberation Sans', sans-serif;color:#1e1e1e;white-space:nowrap;line-height:1;text-align:center;">30</div>
<div style="position:absolute;left:170.72px;width:100px;top:393.3px;font:500 10.7px 'Liberation Sans', sans-serif;color:#1e1e1e;white-space:nowrap;line-height:1;text-align:center;">60</div>
<div style="position:absolute;left:257.58000000000004px;width:100px;top:393.3px;font:500 10.7px 'Liberation Sans', sans-serif;color:#1e1e1e;white-space:nowrap;line-height:1;text-align:center;">90</div>
<div style="position:absolute;left:344.44px;width:100px;top:393.3px;font:500 10.7px 'Liberation Sans', sans-serif;color:#1e1e1e;white-space:nowrap;line-height:1;text-align:center;">120</div>
<div style="position:absolute;left:431.3px;width:100px;top:393.3px;font:500 10.7px 'Liberation Sans', sans-serif;color:#1e1e1e;white-space:nowrap;line-height:1;text-align:center;">150</div>
<div style="position:absolute;left:518.1600000000001px;width:100px;top:393.3px;font:500 10.7px 'Liberation Sans', sans-serif;color:#1e1e1e;white-space:nowrap;line-height:1;text-align:center;">180</div>
<div style="position:absolute;left:605.02px;width:100px;top:393.3px;font:500 10.7px 'Liberation Sans', sans-serif;color:#1e1e1e;white-space:nowrap;line-height:1;text-align:center;">210</div>
<div style="position:absolute;left:691.88px;width:100px;top:393.3px;font:500 10.7px 'Liberation Sans', sans-serif;color:#1e1e1e;white-space:nowrap;line-height:1;text-align:center;">240</div>
<div style="position:absolute;left:778.74px;width:100px;top:393.3px;font:500 10.7px 'Liberation Sans', sans-serif;color:#1e1e1e;white-space:nowrap;line-height:1;text-align:center;">270</div>
<div style="position:absolute;left:899.7px;top:393.3px;font:500 10.7px 'Liberation Sans', sans-serif;color:#1e1e1e;white-space:nowrap;line-height:1;">300gB</div>
<div class="a" style="left:47px;top:425px;width:832px;height:2px;background:#555"></div>
<div class="a" style="left:259px;top:407px;width:2px;height:97px;background:#555"></div>
<div class="a" style="left:357px;top:407px;width:2px;height:97px;background:#555"></div>
<div style="position:absolute;left:296px;top:409px;font:500 12px 'Liberation Sans', sans-serif;color:#222;white-space:nowrap;line-height:1;">读取</div>
<div style="position:absolute;left:397px;top:409px;font:500 12px 'Liberation Sans', sans-serif;color:#222;white-space:nowrap;line-height:1;">写入</div>
<div style="position:absolute;left:51px;top:434px;font:500 12px 'Liberation Sans', sans-serif;color:#222;white-space:nowrap;line-height:1;">顺序</div>
<div style="position:absolute;left:50px;top:460px;font:500 12px 'Liberation Sans', sans-serif;color:#222;white-space:nowrap;line-height:1;">4KB 随机单</div>
<div style="position:absolute;left:50px;top:485px;font:500 12px 'Liberation Sans', sans-serif;color:#222;white-space:nowrap;line-height:1;">4KB 随机多</div>
<div style="position:absolute;right:727px;top:432px;font:bold 11.5px 'Liberation Mono', monospace;color:#111;white-space:nowrap;line-height:1;text-align:right;transform:scaleY(1.1);-webkit-text-stroke:0.1px #111">6142815 KB/s</div>
<div style="position:absolute;right:626px;top:432px;font:bold 11.5px 'Liberation Mono', monospace;color:#111;white-space:nowrap;line-height:1;text-align:right;transform:scaleY(1.1);-webkit-text-stroke:0.1px #111">5016087 KB/s</div>
<div style="position:absolute;right:727px;top:458px;font:bold 11.5px 'Liberation Mono', monospace;color:#111;white-space:nowrap;line-height:1;text-align:right;transform:scaleY(1.1);-webkit-text-stroke:0.1px #111">20324 IOPS</div>
<div style="position:absolute;right:626px;top:458px;font:bold 11.5px 'Liberation Mono', monospace;color:#111;white-space:nowrap;line-height:1;text-align:right;transform:scaleY(1.1);-webkit-text-stroke:0.1px #111">81878 IOPS</div>
<div class="a" style="left:180px;top:476px;width:22px;height:25px;background:#fff;border-bottom:1px solid #999;box-sizing:border-box"></div>
<div style="position:absolute;left:183px;top:482px;font:500 12.5px 'Liberation Sans', sans-serif;color:#111;white-space:nowrap;line-height:1;">32</div>
<div class="a" style="left:202px;top:476px;width:16px;height:25px;background:#f0f0f0;border:1px solid #c4c4c4;box-sizing:border-box"></div><div class="a" style="left:203px;top:488.0px;width:14px;height:1px;background:#c8c8c8"></div><svg class="a" style="left:202px;top:476px" width="16" height="25"><path d="M5.0,8.8 L8.0,5.8 L11.0,8.8z" fill="#111"/><path d="M5.0,16.2 L8.0,19.2 L11.0,16.2z" fill="#111"/></svg>
<div class="a" style="left:17px;top:512px;width:1035px;height:1px;background:#a8a8a8"></div>
<div class="a" style="left:52px;top:524px;width:13px;height:13px;border:1px solid #555;border-radius:2.5px;box-sizing:border-box;background:#fbfbfb"></div>
<div style="position:absolute;left:68px;top:525px;font:500 12px 'Liberation Sans', sans-serif;color:#1a1a1a;white-space:nowrap;line-height:1;">块大小测量</div>
<div style="position:absolute;left:35px;top:546px;font:500 10.5px 'Liberation Sans', sans-serif;color:#1e1e1e;white-space:nowrap;line-height:1;">MB/s</div>
<div style="position:absolute;right:1050px;top:668.5px;font:500 11px 'Liberation Sans', sans-serif;color:#1e1e1e;white-space:nowrap;line-height:1;text-align:right;">5</div>
<div style="position:absolute;right:1050px;top:639.9px;font:500 11px 'Liberation Sans', sans-serif;color:#1e1e1e;white-space:nowrap;line-height:1;text-align:right;">10</div>
<div style="position:absolute;right:1050px;top:611.3px;font:500 11px 'Liberation Sans', sans-serif;color:#1e1e1e;white-space:nowrap;line-height:1;text-align:right;">15</div>
<div style="position:absolute;right:1050px;top:582.7px;font:500 11px 'Liberation Sans', sans-serif;color:#1e1e1e;white-space:nowrap;line-height:1;text-align:right;">20</div>
<div style="position:absolute;right:1050px;top:554.1px;font:500 11px 'Liberation Sans', sans-serif;color:#1e1e1e;white-space:nowrap;line-height:1;text-align:right;">25</div>
<div style="position:absolute;left:14.700000000000003px;width:100px;top:709px;font:500 11px 'Liberation Sans', sans-serif;color:#1e1e1e;white-space:nowrap;line-height:1;text-align:center;">0.5</div>
<div style="position:absolute;left:74.80000000000001px;width:100px;top:709px;font:500 11px 'Liberation Sans', sans-serif;color:#1e1e1e;white-space:nowrap;line-height:1;text-align:center;">1</div>
<div style="position:absolute;left:134.9px;width:100px;top:709px;font:500 11px 'Liberation Sans', sans-serif;color:#1e1e1e;white-space:nowrap;line-height:1;text-align:center;">2</div>
<div style="position:absolute;left:195.0px;width:100px;top:709px;font:500 11px 'Liberation Sans', sans-serif;color:#1e1e1e;white-space:nowrap;line-height:1;text-align:center;">4</div>
<div style="position:absolute;left:255.10000000000002px;width:100px;top:709px;font:500 11px 'Liberation Sans', sans-serif;color:#1e1e1e;white-space:nowrap;line-height:1;text-align:center;">8</div>
<div style="position:absolute;left:315.2px;width:100px;top:709px;font:500 11px 'Liberation Sans', sans-serif;color:#1e1e1e;white-space:nowrap;line-height:1;text-align:center;">16</div>
<div style="position:absolute;left:375.3px;width:100px;top:709px;font:500 11px 'Liberation Sans', sans-serif;color:#1e1e1e;white-space:nowrap;line-height:1;text-align:center;">32</div>
<div style="position:absolute;left:435.4px;width:100px;top:709px;font:500 11px 'Liberation Sans', sans-serif;color:#1e1e1e;white-space:nowrap;line-height:1;text-align:center;">64</div>
<div style="position:absolute;left:495.5px;width:100px;top:709px;font:500 11px 'Liberation Sans', sans-serif;color:#1e1e1e;white-space:nowrap;line-height:1;text-align:center;">128</div>
<div style="position:absolute;left:555.6px;width:100px;top:709px;font:500 11px 'Liberation Sans', sans-serif;color:#1e1e1e;white-space:nowrap;line-height:1;text-align:center;">256</div>
<div style="position:absolute;left:615.7px;width:100px;top:709px;font:500 11px 'Liberation Sans', sans-serif;color:#1e1e1e;white-space:nowrap;line-height:1;text-align:center;">512</div>
<div style="position:absolute;left:675.8000000000001px;width:100px;top:709px;font:500 11px 'Liberation Sans', sans-serif;color:#1e1e1e;white-space:nowrap;line-height:1;text-align:center;">1024</div>
<div style="position:absolute;left:735.9000000000001px;width:100px;top:709px;font:500 11px 'Liberation Sans', sans-serif;color:#1e1e1e;white-space:nowrap;line-height:1;text-align:center;">2048</div>
<div style="position:absolute;left:796.0000000000001px;width:100px;top:709px;font:500 11px 'Liberation Sans', sans-serif;color:#1e1e1e;white-space:nowrap;line-height:1;text-align:center;">4096</div>
<div style="position:absolute;left:856.1px;width:100px;top:709px;font:500 11px 'Liberation Sans', sans-serif;color:#1e1e1e;white-space:nowrap;line-height:1;text-align:center;">8192</div>
<div class="a" style="left:875px;top:548px;width:6px;height:6px;background:#1890d0"></div>
<div style="position:absolute;left:882px;top:545px;font:500 12px 'Liberation Sans', sans-serif;color:#222;white-space:nowrap;line-height:1;">读取</div>
<div class="a" style="left:911px;top:548px;width:6px;height:6px;background:#e07010"></div>
<div style="position:absolute;left:918px;top:545px;font:500 12px 'Liberation Sans', sans-serif;color:#222;white-space:nowrap;line-height:1;">写入</div>
<div class="btn" style="left:970px;top:155px;width:85px;height:27px;border-color:#d0d0d0;border-bottom-color:#b8b8b8"></div>
<div style="position:absolute;left:1000px;top:162px;font:500 12px 'Liberation Sans', sans-serif;color:#111;white-space:nowrap;line-height:1;">开始</div>
<div style="position:absolute;left:968px;top:194px;font:500 12px 'Liberation Sans', sans-serif;color:#222;white-space:nowrap;line-height:1;">驱动器</div>
<div class="combo" style="left:968px;top:215px;width:87px;height:24px"></div>
<div style="position:absolute;left:973px;top:222px;font:500 12px 'Liberation Sans', sans-serif;color:#111;white-space:nowrap;line-height:1;">E:</div>
<div class="chev" style="left:1043px;top:223px"></div>
<div style="position:absolute;left:968px;top:254px;font:500 12px 'Liberation Sans', sans-serif;color:#222;white-space:nowrap;line-height:1;">文件长度</div>
<div class="a" style="left:968px;top:283px;width:49px;height:25px;background:#fff;border:1px solid #e2e2e2;border-bottom:1px solid #8a8a8a;box-sizing:border-box"></div>
<div style="position:absolute;left:971.5px;top:289px;font:500 12px 'Liberation Sans', sans-serif;color:#111;white-space:nowrap;line-height:1;">300000</div>
<div class="a" style="left:1017px;top:283px;width:15px;height:25px;background:#f0f0f0;border:1px solid #c4c4c4;box-sizing:border-box"></div><div class="a" style="left:1018px;top:295.0px;width:13px;height:1px;background:#c8c8c8"></div><svg class="a" style="left:1017px;top:283px" width="15" height="25"><path d="M4.5,8.8 L7.5,5.8 L10.5,8.8z" fill="#111"/><path d="M4.5,16.2 L7.5,19.2 L10.5,16.2z" fill="#111"/></svg>
<div style="position:absolute;left:1035px;top:294px;font:500 12px 'Liberation Sans', sans-serif;color:#111;white-space:nowrap;line-height:1;">MB</div>
<div style="position:absolute;left:968px;top:334px;font:500 12px 'Liberation Sans', sans-serif;color:#222;white-space:nowrap;line-height:1;">数据模式</div>
<div class="combo" style="left:968px;top:357px;width:87px;height:24px"></div>
<div style="position:absolute;left:972px;top:363px;font:500 12px 'Liberation Sans', sans-serif;color:#111;white-space:nowrap;line-height:1;">混合</div>
<div class="chev" style="left:1043px;top:365px"></div>
<div style="position:absolute;left:968px;top:589px;font:500 12px 'Liberation Sans', sans-serif;color:#222;white-space:nowrap;line-height:1;">文件长度</div>
<div class="combo" style="left:968px;top:614px;width:87px;height:25px"></div>
<div style="position:absolute;left:972.5px;top:621px;font:500 12.6px 'Liberation Sans', sans-serif;color:#111;white-space:nowrap;line-height:1;">64 MB</div>
<div class="chev" style="left:1043px;top:622px"></div>
<div style="position:absolute;left:968px;top:659px;font:500 12px 'Liberation Sans', sans-serif;color:#222;white-space:nowrap;line-height:1;">延迟</div>
<div class="a" style="left:969px;top:682px;width:62px;height:25px;background:#fff;border-bottom:1px solid #999;box-sizing:border-box"></div>
<div style="position:absolute;left:974px;top:688px;font:500 12.5px 'Liberation Sans', sans-serif;color:#111;white-space:nowrap;line-height:1;">0</div>
<div class="a" style="left:1037px;top:681px;width:15px;height:26px;background:#f0f0f0;border:1px solid #c4c4c4;box-sizing:border-box"></div><div class="a" style="left:1038px;top:693.5px;width:13px;height:1px;background:#c8c8c8"></div><svg class="a" style="left:1037px;top:681px" width="15" height="26"><path d="M4.5,9.1 L7.5,6.1 L10.5,9.1z" fill="#111"/><path d="M4.5,16.9 L7.5,19.9 L10.5,16.9z" fill="#111"/></svg>
<svg class="a" style="left:908px;top:722px" width="40" height="38" viewBox="0 0 40 38"><circle cx="19" cy="18" r="15" fill="none" stroke="#d4d4d4" stroke-width="1.5"/></svg>
<div style="position:absolute;left:914px;top:728px;font:normal 21px 'Liberation Sans', sans-serif;color:#c8c8c8;white-space:nowrap;line-height:1;-webkit-text-stroke:0;text-shadow:0 0 1px #fff">值</div>
<div style="position:absolute;left:953px;top:727px;font:normal 23px 'Liberation Sans', sans-serif;color:#c8c8c8;white-space:nowrap;line-height:1;-webkit-text-stroke:0;text-shadow:0 0 1px #fff">什么值得买</div>
<div style="position:absolute;left:983px;top:737.5px;font:normal 17px 'Liberation Sans', sans-serif;color:#4a9fa8;white-space:nowrap;line-height:1;-webkit-text-stroke:0">SMYZ.NET</div>
</body></html>
